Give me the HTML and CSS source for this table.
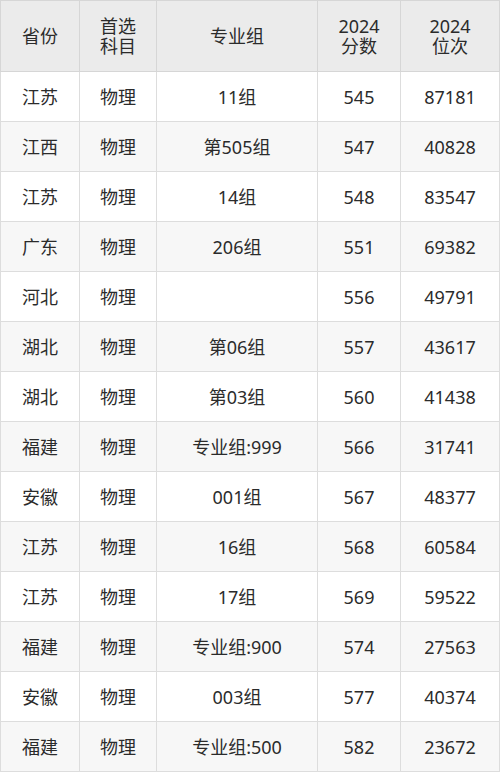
FILE: index.html
```html
<!DOCTYPE html>
<html lang="zh">
<head>
<meta charset="utf-8">
<link rel="stylesheet" href="styles.css">
</head>
<body>
<table class="score-table">
  <colgroup>
    <col class="c1"><col class="c2"><col class="c3"><col class="c4"><col class="c5">
  </colgroup>
  <thead>
    <tr><th>省份</th><th>首选<br>科目</th><th>专业组</th><th>2024<br>分数</th><th>2024<br>位次</th></tr>
  </thead>
  <tbody>
    <tr><td>江苏</td><td>物理</td><td>11组</td><td>545</td><td>87181</td></tr>
    <tr><td>江西</td><td>物理</td><td>第505组</td><td>547</td><td>40828</td></tr>
    <tr><td>江苏</td><td>物理</td><td>14组</td><td>548</td><td>83547</td></tr>
    <tr><td>广东</td><td>物理</td><td>206组</td><td>551</td><td>69382</td></tr>
    <tr><td>河北</td><td>物理</td><td></td><td>556</td><td>49791</td></tr>
    <tr><td>湖北</td><td>物理</td><td>第06组</td><td>557</td><td>43617</td></tr>
    <tr><td>湖北</td><td>物理</td><td>第03组</td><td>560</td><td>41438</td></tr>
    <tr><td>福建</td><td>物理</td><td>专业组:999</td><td>566</td><td>31741</td></tr>
    <tr><td>安徽</td><td>物理</td><td>001组</td><td>567</td><td>48377</td></tr>
    <tr><td>江苏</td><td>物理</td><td>16组</td><td>568</td><td>60584</td></tr>
    <tr><td>江苏</td><td>物理</td><td>17组</td><td>569</td><td>59522</td></tr>
    <tr><td>福建</td><td>物理</td><td>专业组:900</td><td>574</td><td>27563</td></tr>
    <tr><td>安徽</td><td>物理</td><td>003组</td><td>577</td><td>40374</td></tr>
    <tr><td>福建</td><td>物理</td><td>专业组:500</td><td>582</td><td>23672</td></tr>
  </tbody>
</table>
</body>
</html>
```
FILE: styles.css
```css
html, body {
  margin: 0;
  padding: 0;
  background: #ffffff;
}
.score-table {
  width: 499px;
  border-collapse: collapse;
  table-layout: fixed;
  font-family: "Noto Sans", "Noto Sans CJK SC", sans-serif;
  font-size: 18px;
  color: #2b2b2b;
  border: 1px solid #d9d9d9;
}
.c1 { width: 79px; }
.c2 { width: 77px; }
.c3 { width: 161px; }
.c4 { width: 83px; }
.c5 { width: 99px; }
.score-table th,
.score-table td {
  border: 1px solid #dddddd;
  text-align: center;
  vertical-align: middle;
  padding: 0;
}
.score-table th {
  height: 70px;
  font-weight: normal;
  line-height: 20px;
  background: #ebebeb;
  border-color: #d6d6d6;
}
.score-table td {
  height: 49px;
  line-height: 22px;
}
.score-table tbody tr:nth-child(even) td {
  background: #f7f7f7;
}
```
